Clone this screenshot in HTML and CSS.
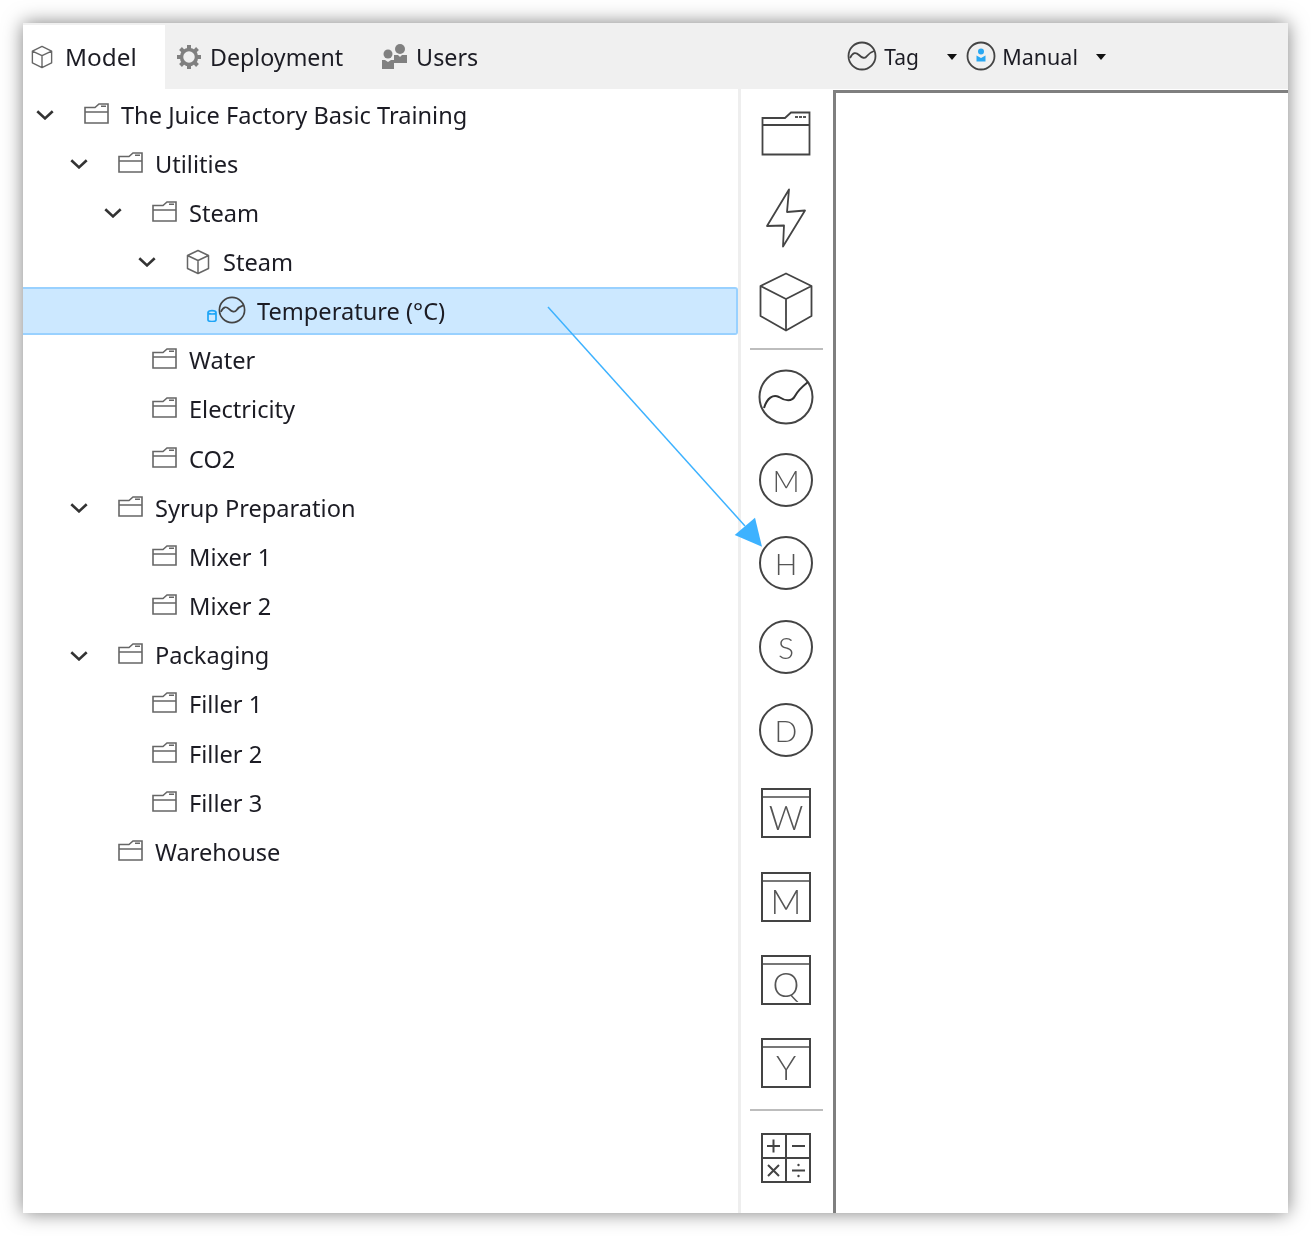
FILE: index.html
```html
<!DOCTYPE html>
<html lang="en">
<head>
<meta charset="utf-8">
<title>Model</title>
<link rel="stylesheet" href="styles.css">
</head>
<body>
<svg class="defs" width="0" height="0" aria-hidden="true">
  <defs>
    <symbol id="folder" viewBox="0 0 25 21"><path d="M1 4.500V20H24V1H15L11 4.500H1ZM1 9H24M17 3.300H22" fill="none" stroke="#666" stroke-width="1.600"/></symbol>
    <symbol id="chev" viewBox="0 0 18 10"><path d="M2 2L9 8.500L16 2" fill="none" stroke="#333" stroke-width="2.400"/></symbol>
    <symbol id="cube" viewBox="0 0 24 26"><path d="M12 1.500L22.500 6.500V19.500L12 24.500L1.500 19.500V6.500ZM1.500 6.500L12 11.500L22.500 6.500M12 11.500V24.500" fill="none" stroke="#666" stroke-width="1.500" stroke-linejoin="round"/></symbol>
    <symbol id="trend" viewBox="0 0 30 30"><circle cx="15" cy="15" r="13.500" fill="none" stroke="#444" stroke-width="1.800"/><path d="M3 17C6 11 9 11 12 14C15 17 18 18 20 15C22 12 24 11 27 10" fill="none" stroke="#444" stroke-width="1.800"/></symbol>
  </defs>
</svg>
<div class="window">
  <header class="topbar">
    <div class="tab tab-active">
      <svg class="tab-icon cube-tab"><use href="#cube"/></svg>
      <span>Model</span>
    </div>
    <div class="tab tab-deploy">
      <svg class="tab-icon gear" viewBox="0 0 26 26"><circle cx="13" cy="13" r="7.500" fill="none" stroke="#808080" stroke-width="3.500"/><path d="M13 1V5M13 21V25M1 13H5M21 13H25M4.500 4.500L7.300 7.300M18.700 18.700L21.500 21.500M4.500 21.500L7.300 18.700M18.700 7.300L21.500 4.500" stroke="#808080" stroke-width="4"/></svg>
      <span>Deployment</span>
    </div>
    <div class="tab tab-users">
      <svg class="tab-icon users" viewBox="0 0 27 27"><circle cx="19" cy="6" r="5" fill="#808080"/><path d="M13 12H17L19 14L21 12H26V20H13Z" fill="#808080"/><circle cx="7" cy="11" r="4.500" fill="#808080"/><path d="M1 17H4L7 19L10 17H13V26H1Z" fill="#808080"/></svg>
      <span>Users</span>
    </div>
    <div class="controls">
      <svg class="ctl-icon"><use href="#trend"/></svg>
      <span class="ctl-tag">Tag</span>
      <span class="caret caret-tag"></span>
      <svg class="ctl-icon" viewBox="0 0 30 30"><circle cx="15" cy="15" r="13.500" fill="none" stroke="#444" stroke-width="1.800"/><circle cx="15" cy="10.600" r="3" fill="#2aa8f2"/><path d="M10.500 14.500L15 17L19.500 14.500V20.500H10.500Z" fill="#2aa8f2"/></svg>
      <span class="ctl-manual">Manual</span>
      <span class="caret caret-manual"></span>
    </div>
  </header>
  <div class="main">
    <ul class="tree">
      <li class="row lvl-0"><svg class="chev"><use href="#chev"/></svg><svg class="ico"><use href="#folder"/></svg><span>The Juice Factory Basic Training</span></li>
      <li class="row lvl-1"><svg class="chev"><use href="#chev"/></svg><svg class="ico"><use href="#folder"/></svg><span>Utilities</span></li>
      <li class="row lvl-2"><svg class="chev"><use href="#chev"/></svg><svg class="ico"><use href="#folder"/></svg><span>Steam</span></li>
      <li class="row lvl-3"><svg class="chev"><use href="#chev"/></svg><svg class="ico ico-cube"><use href="#cube"/></svg><span>Steam</span></li>
      <li class="row lvl-4 selected">
        <span class="nochev"><svg class="db" viewBox="0 0 10 13"><path d="M1 3.500V11C1 13 9 13 9 11V3.500M1 3.500C1 1 9 1 9 3.500C9 5.500 1 5.500 1 3.500Z" fill="none" stroke="#1ea5f7" stroke-width="1.700"/></svg></span>
        <svg class="ico-trend"><use href="#trend"/></svg><span>Temperature (°C)</span>
      </li>
      <li class="row lvl-2 leaf"><span class="nochev"></span><svg class="ico"><use href="#folder"/></svg><span>Water</span></li>
      <li class="row lvl-2 leaf"><span class="nochev"></span><svg class="ico"><use href="#folder"/></svg><span>Electricity</span></li>
      <li class="row lvl-2 leaf"><span class="nochev"></span><svg class="ico"><use href="#folder"/></svg><span>CO2</span></li>
      <li class="row lvl-1"><svg class="chev"><use href="#chev"/></svg><svg class="ico"><use href="#folder"/></svg><span>Syrup Preparation</span></li>
      <li class="row lvl-2 leaf"><span class="nochev"></span><svg class="ico"><use href="#folder"/></svg><span>Mixer 1</span></li>
      <li class="row lvl-2 leaf"><span class="nochev"></span><svg class="ico"><use href="#folder"/></svg><span>Mixer 2</span></li>
      <li class="row lvl-1"><svg class="chev"><use href="#chev"/></svg><svg class="ico"><use href="#folder"/></svg><span>Packaging</span></li>
      <li class="row lvl-2 leaf"><span class="nochev"></span><svg class="ico"><use href="#folder"/></svg><span>Filler 1</span></li>
      <li class="row lvl-2 leaf"><span class="nochev"></span><svg class="ico"><use href="#folder"/></svg><span>Filler 2</span></li>
      <li class="row lvl-2 leaf"><span class="nochev"></span><svg class="ico"><use href="#folder"/></svg><span>Filler 3</span></li>
      <li class="row lvl-1 leaf"><span class="nochev"></span><svg class="ico"><use href="#folder"/></svg><span>Warehouse</span></li>
    </ul>
    <aside class="palette">
      <div class="tool tool-top"><svg class="tool-folder" viewBox="0 0 50 45"><path d="M1.500 8V43.500H48.500V1.500H30L24 7H1.500V14H48.500" fill="none" stroke="#444" stroke-width="1.800"/><path d="M34 6H46" fill="none" stroke="#555" stroke-width="1.800" stroke-dasharray="3 1"/></svg></div>
      <div class="tool tool-top"><svg class="tool-bolt" viewBox="0 0 42 60"><path d="M24 1.500L2 38L19 37.500L18 58.500L40 22.500L22 24Z" fill="none" stroke="#444" stroke-width="1.800" stroke-linejoin="round"/></svg></div>
      <div class="tool tool-top"><svg class="tool-cube" viewBox="0 0 54 60"><path d="M27 1.500L52.500 14V44L27 58.500L1.500 44V14ZM1.500 14L27 27L52.500 14M27 27V58.500" fill="none" stroke="#444" stroke-width="1.800" stroke-linejoin="round"/></svg></div>
      <div class="sep"></div>
      <div class="tool"><svg class="tool-trend" viewBox="0 0 56 56"><circle cx="28" cy="28" r="26.500" fill="none" stroke="#444" stroke-width="2"/><path d="M6 39C9 29 15 25 21 28C27 32 34 33 37 27C40 21 45 17 50 13" fill="none" stroke="#333" stroke-width="2"/></svg></div>
      <div class="tool"><div class="round">M</div></div>
      <div class="tool"><div class="round">H</div></div>
      <div class="tool"><div class="round">S</div></div>
      <div class="tool"><div class="round">D</div></div>
      <div class="tool"><div class="boxed">W</div></div>
      <div class="tool"><div class="boxed">M</div></div>
      <div class="tool"><div class="boxed">Q</div></div>
      <div class="tool"><div class="boxed">Y</div></div>
      <div class="sep"></div>
      <div class="tool"><svg class="tool-calc" viewBox="0 0 50 50"><path d="M1 1H49V49H1ZM1 25H49M25 1V49" fill="none" stroke="#444" stroke-width="2"/><path d="M6 13H19M12.500 6.500V19.500M31 13H44M7 32L18 43M18 32L7 43M31 37.500H44" fill="none" stroke="#444" stroke-width="2"/><circle cx="37.500" cy="32" r="1.200" fill="#444"/><circle cx="37.500" cy="43" r="1.200" fill="#444"/></svg></div>
    </aside>
    <div class="canvas"></div>
  </div>
</div>
<svg class="arrow" viewBox="0 0 230 260" width="230" height="260"><path d="M6 6L203 225" fill="none" stroke="#3db2ff" stroke-width="1.500"/><path d="M220 245.700L192.700 234L213 216.700Z" fill="#3db2ff"/></svg>
</body>
</html>
```

FILE: styles.css
```css
* { box-sizing: border-box; }
html, body { margin: 0; padding: 0; background: #fff; }
body {
  width: 1311px;
  height: 1236px;
  padding: 23px;
  position: relative;
  overflow: hidden;
  font-family: "Noto Sans", "Open Sans", sans-serif;
  color: #1c1c24;
}
.defs { position: absolute; }
.window {
  width: 1265px;
  height: 1190px;
  background: #fff;
  box-shadow: 0 0 18px rgba(0, 0, 0, .5);
  display: flex;
  flex-direction: column;
  overflow: hidden;
}
.topbar {
  height: 66px;
  flex: none;
  background: #f0f0f0;
  display: flex;
  align-items: flex-end;
  filter: blur(.3px);
}
.tab {
  height: 64px;
  display: flex;
  align-items: center;
  padding-bottom: 1px;
}
.tab-active { width: 142px; background: #fff; padding-left: 8px; gap: 12px; font-size: 24.300px; }
.tab-deploy { margin-left: 11px; gap: 8px; font-size: 23.200px; }
.tab-users { margin-left: 38px; gap: 8px; font-size: 23.300px; }
.tab-icon { flex: none; display: block; }
.cube-tab { width: 22px; height: 24px; }
.gear { width: 26px; height: 26px; }
.users { width: 27px; height: 27px; }
.controls {
  margin-left: 369px;
  height: 64px;
  display: flex;
  align-items: center;
  padding-bottom: 3px;
  font-size: 21.500px;
}
.ctl-icon { width: 30px; height: 30px; flex: none; }
.ctl-tag { margin: 2px 0 0 7px; width: 33px; font-size: 21px; }
.ctl-manual { margin: 2px 0 0 6px; }
.caret { width: 0; height: 0; border: 5.500px solid transparent; border-top: 6px solid #111; border-bottom: 0; margin-top: 2px; }
.caret-tag { margin-left: 30px; margin-right: 9px; }
.caret-manual { margin-left: 18px; }
.main { flex: 1; display: flex; min-height: 0; }
.tree {
  list-style: none;
  margin: 0;
  padding: 1px 0 0;
  width: 715px;
  flex: none;
  display: flex;
  flex-direction: column;
  gap: 1.160px;
  font-size: 23.600px;
  filter: blur(.3px);
}
.row {
  height: 48px;
  flex: none;
  display: flex;
  align-items: center;
  white-space: nowrap;
  padding-top: 1px;
}
.lvl-0 { padding-left: 12px; }
.lvl-1 { padding-left: 46px; }
.lvl-2 { padding-left: 80px; }
.lvl-3 { padding-left: 114px; }
.lvl-4 { padding-left: 148px; }
.chev { width: 20px; height: 11px; margin-right: 29px; flex: none; }
.nochev { width: 49px; flex: none; display: flex; justify-content: flex-end; }
.ico { width: 25px; height: 21px; margin-right: 12px; flex: none; margin-top: -3px; }
.ico-cube { height: 26px; width: 24px; margin-right: 13px; margin-top: 0; }
.ico-trend { width: 28px; height: 28px; margin-left: -2px; margin-right: 11px; flex: none; margin-top: -2px; }
.db { width: 10px; height: 13px; margin-right: 3px; margin-top: 10px; display: block; }
.selected {
  background: #cce8ff;
  border: solid #99d1ff;
  border-width: 2px 2px 2px 0;
  border-radius: 0 3px 3px 0;
  padding-top: 0;
}
.palette {
  width: 95px;
  flex: none;
  border-left: 3px solid #eeeeee;
  padding: 2.500px 2px 0 0;
  display: flex;
  flex-direction: column;
  align-items: center;
  filter: blur(.3px);
}
.tool {
  height: 83.350px;
  flex: none;
  width: 100%;
  display: flex;
  align-items: center;
  justify-content: center;
}
.tool-top { height: 84.200px; }
.sep {
  width: 73px;
  flex: none;
  height: 10px;
  margin-bottom: 1px;
  background: linear-gradient(#bdbdbd, #bdbdbd) center / 100% 2px no-repeat;
}
.tool-folder { width: 50px; height: 45px; }
.tool-bolt { width: 42px; height: 60px; }
.tool-cube { width: 54px; height: 60px; }
.tool-trend { width: 56px; height: 56px; }
.tool-calc { width: 50px; height: 50px; }
.round {
  width: 54px;
  height: 54px;
  border: 2px solid #444;
  border-radius: 50%;
  display: flex;
  align-items: center;
  justify-content: center;
  font: 300 30px/1 Lato, "Noto Sans", sans-serif;
  color: #555;
}
.boxed {
  width: 50px;
  height: 50px;
  border: 2px solid #444;
  display: flex;
  align-items: center;
  justify-content: center;
  padding-top: 8px;
  font: 300 34px/1 Lato, "Noto Sans", sans-serif;
  color: #555;
  background: linear-gradient(#777, #777) 0 6px / 100% 2px no-repeat;
}
.canvas {
  flex: 1;
  margin-top: 1px;
  border-left: 3px solid #7f7f7f;
  border-top: 3px solid #7f7f7f;
}
.arrow { position: absolute; left: 542px; top: 301px; }
```
